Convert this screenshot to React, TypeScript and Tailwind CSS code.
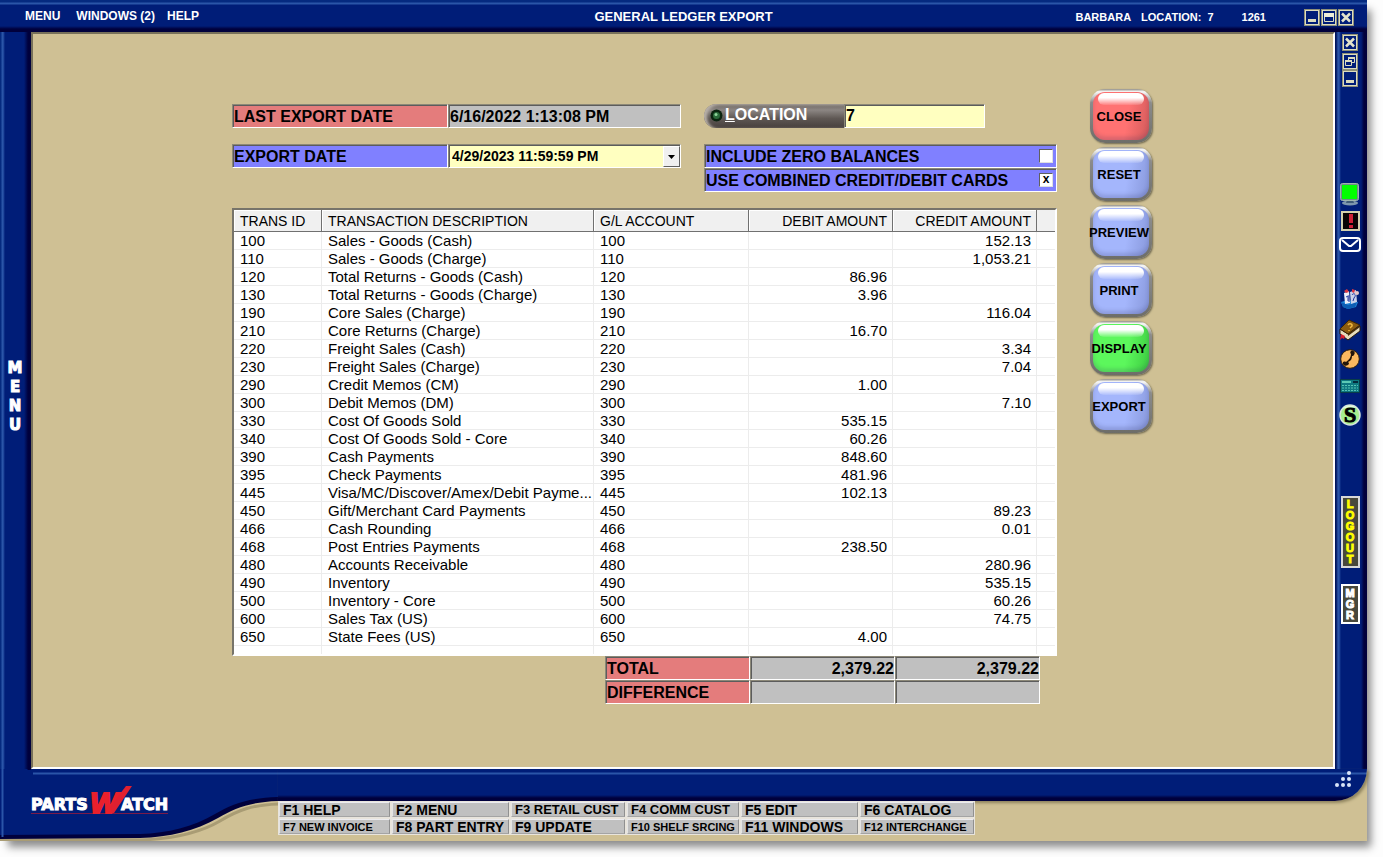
import React from 'react';
import clsx from 'clsx';

const rows = [
  ['100', 'Sales - Goods (Cash)', '', '152.13'],
  ['110', 'Sales - Goods (Charge)', '', '1,053.21'],
  ['120', 'Total Returns - Goods (Cash)', '86.96', ''],
  ['130', 'Total Returns - Goods (Charge)', '3.96', ''],
  ['190', 'Core Sales (Charge)', '', '116.04'],
  ['210', 'Core Returns (Charge)', '16.70', ''],
  ['220', 'Freight Sales (Cash)', '', '3.34'],
  ['230', 'Freight Sales (Charge)', '', '7.04'],
  ['290', 'Credit Memos (CM)', '1.00', ''],
  ['300', 'Debit Memos (DM)', '', '7.10'],
  ['330', 'Cost Of Goods Sold', '535.15', ''],
  ['340', 'Cost Of Goods Sold - Core', '60.26', ''],
  ['390', 'Cash Payments', '848.60', ''],
  ['395', 'Check Payments', '481.96', ''],
  ['445', 'Visa/MC/Discover/Amex/Debit Payme...', '102.13', ''],
  ['450', 'Gift/Merchant Card Payments', '', '89.23'],
  ['466', 'Cash Rounding', '', '0.01'],
  ['468', 'Post Entries Payments', '238.50', ''],
  ['480', 'Accounts Receivable', '', '280.96'],
  ['490', 'Inventory', '', '535.15'],
  ['500', 'Inventory - Core', '', '60.26'],
  ['600', 'Sales Tax (US)', '', '74.75'],
  ['650', 'State Fees (US)', '4.00', ''],
];

const functionKeys = [
  { label: 'F1 HELP', size: 'text-[14px]' },
  { label: 'F2 MENU', size: 'text-[14px]' },
  { label: 'F3 RETAIL CUST', size: 'text-[13px]' },
  { label: 'F4 COMM CUST', size: 'text-[13px]' },
  { label: 'F5 EDIT', size: 'text-[14px]' },
  { label: 'F6 CATALOG', size: 'text-[14px]' },
  { label: 'F7 NEW INVOICE', size: 'text-[11px]' },
  { label: 'F8 PART ENTRY', size: 'text-[14px]' },
  { label: 'F9 UPDATE', size: 'text-[14px]' },
  { label: 'F10 SHELF SRCING', size: 'text-[11px]' },
  { label: 'F11 WINDOWS', size: 'text-[14px]' },
  { label: 'F12 INTERCHANGE', size: 'text-[11px]' },
];

const actions = [
  { label: 'CLOSE', color: 'bg-[linear-gradient(100deg,#ff7272_60%,#d25a5a)]' },
  { label: 'RESET', color: 'bg-[linear-gradient(100deg,#a4b6fc_60%,#8797da)]' },
  { label: 'PREVIEW', color: 'bg-[linear-gradient(100deg,#a4b6fc_60%,#8797da)]' },
  { label: 'PRINT', color: 'bg-[linear-gradient(100deg,#a4b6fc_60%,#8797da)]' },
  { label: 'DISPLAY', color: 'bg-[linear-gradient(100deg,#5cf75c_60%,#3ccb40)]' },
  { label: 'EXPORT', color: 'bg-[linear-gradient(100deg,#a4b6fc_60%,#8797da)]' },
];

const sunken = 'border border-t-[#8c8878] border-l-[#8c8878] border-b-white border-r-white shadow-[inset_1px_1px_0_#5c5c5c]';

const WindowIcon = ({ kind }: { kind: string }) => (
  <svg width="16" height="17" viewBox="0 0 16 17" fill="none" aria-hidden="true">
    <rect x="0.5" y="0.5" width="15" height="16" stroke="#8f9078" />
    <rect x="1.5" y="1.5" width="13" height="14" stroke="#dcdcc0" />
    {kind === 'min' && <path d="M4 10h8v3h-8z" fill="#dcdcc0" />}
    {kind === 'max' && (
      <>
        <path d="M3.5 4.5h9v8h-9z" stroke="#dcdcc0" />
        <path d="M3 4h10v4h-10z" fill="#eeeed8" />
      </>
    )}
    {kind === 'close' && <path d="M4 4.500l8 8M12 4.500l-8 8" stroke="#e4e4cc" strokeWidth="2.500" />}
    {kind === 'restore' && (
      <>
        <path d="M6.5 7V4.5h6v5h-3" stroke="#dcdcc0" />
        <path d="M6 4h7v2h-7z" fill="#dcdcc0" />
        <path d="M3.500 7.500h6v5h-6z" stroke="#dcdcc0" />
        <path d="M3 7h7v2h-7z" fill="#dcdcc0" />
      </>
    )}
  </svg>
);

const WindowButton = ({ kind, label }: { kind: string; label: string }) => (
  <button type="button" aria-label={label} className="block">
    <WindowIcon kind={kind} />
  </button>
);

const TopBar = () => (
  <header className="grid h-8 grid-cols-[1fr_auto_1fr] items-center bg-[linear-gradient(to_bottom,#052a80_0_2px,#2a55a8_3px_4px,#001d78_5px_26px,#00003c_29px)] font-bold text-white">
    <nav className="flex pl-[25px] text-[12px]">
      <a href="#" className="mr-4">MENU</a>
      <a href="#" className="mr-3">WINDOWS (2)</a>
      <a href="#">HELP</a>
    </nav>
    <h1 className="pt-0.5 text-[13px]">GENERAL LEDGER EXPORT</h1>
    <div className="flex items-center justify-end pt-0.5 pr-[13px] text-[11px]">
      <span className="mr-2.5">BARBARA</span>
      <span className="mr-1.5">LOCATION:</span>
      <span className="mr-7">7</span>
      <span className="mr-[38px]">1261</span>
      <div className="flex gap-px">
        <WindowButton kind="min" label="Minimize" />
        <WindowButton kind="max" label="Maximize" />
        <WindowButton kind="close" label="Close" />
      </div>
    </div>
  </header>
);

const MonitorIcon = () => (
  <svg width="20" height="24" viewBox="0 0 20 24" aria-hidden="true">
    <ellipse cx="10" cy="20" rx="8" ry="2.500" fill="#7d96ad" />
    <path d="M7 17h6l1 3h-8z" fill="#3f5b78" />
    <rect x="0.5" y="0.5" width="18" height="17" rx="2" fill="#6f8c8c" stroke="#9eb4ae" />
    <rect x="2" y="2" width="15" height="14" fill="#00ff00" />
  </svg>
);

const AlertIcon = () => (
  <svg width="19" height="20" viewBox="0 0 19 20" aria-hidden="true">
    <rect x="1" y="1" width="17" height="18" fill="#0a0505" stroke="#d4d0ac" strokeWidth="2" />
    <path d="M8 3h4v9h-4zM8 14h4v3h-4z" fill="#cf2036" />
  </svg>
);

const MailIcon = () => (
  <svg width="22" height="16" viewBox="0 0 22 16" fill="none" aria-hidden="true">
    <rect x="1" y="1" width="20" height="13" rx="3" stroke="#fff" strokeWidth="2" />
    <path d="M3 3l7 6h2l7-6" stroke="#fff" strokeWidth="2" />
  </svg>
);

const CardsIcon = () => (
  <svg width="20" height="20" viewBox="0 0 20 20" aria-hidden="true">
    <path d="M1 13l7-2 10 2-2 5-8 2-5-2z" fill="#1c84d8" />
    <path d="M1 13l7 3 9-3-2 5-7 2-5-2z" fill="#0d5db4" />
    <path d="M4 4l5-2 1 12-5 1z" fill="#eef0fa" />
    <path d="M10 3l6-2 1 12-6 2z" fill="#c9d1ea" />
    <path d="M4 2l3-2 2 3-3 1zM12 0l3 1-1 3-2-1z" fill="#d93844" />
    <path d="M6 8l2-1v5M12 6c2-3 5 0 2 3l-1 3M9 6v7" stroke="#2538a0" fill="none" />
    <circle cx="17" cy="4" r="2" fill="#e8c8c8" />
  </svg>
);

const BookIcon = () => (
  <svg width="22" height="22" viewBox="0 0 22 22" aria-hidden="true">
    <path d="M1 10l8 5 12-8v5l-12 9-8-6z" fill="#e6ddbd" stroke="#2c1b08" />
    <path d="M10 1l11 5-12 9-8-5z" fill="#8a5c10" stroke="#3b2405" />
    <path d="M9 15l12-8v1l-12 9z" fill="#4b3006" />
    <path d="M9 6c2-3 6 0 3 2l-1 1M10 11v1" stroke="#f1ba40" strokeWidth="1.500" fill="none" />
    <path d="M2 15l4 2-1 3-2-1-2 2z" fill="#d81f2a" />
  </svg>
);

const PhoneIcon = () => (
  <svg width="20" height="20" viewBox="0 0 20 20" aria-hidden="true">
    <circle cx="10" cy="10" r="9.300" fill="#fbb860" stroke="#2c1c08" />
    <path d="M11 2c4-1 5 3 2 5h-1c0 3-1 5-4 6l1 1c0 3-5 4-6 1-1-2 1-3 3-2 3-2 5-5 5-8-1-1-1-2 0-3z" fill="#23150a" />
  </svg>
);

const CalculatorIcon = () => (
  <svg width="20" height="14" viewBox="0 0 20 14" aria-hidden="true">
    <rect width="20" height="14" fill="#083c48" />
    <rect x="1" y="1" width="18" height="12" fill="#0f7880" />
    <path d="M2 3h9" stroke="#5cc9b4" strokeWidth="2" />
    <path d="M2 6.500h16M2 9h16M2 11.500h16" stroke="#58c4b4" strokeDasharray="2 1" />
    <path d="M13 3h5" stroke="#052a3c" strokeWidth="2" />
  </svg>
);

const DollarIcon = () => (
  <svg width="22" height="24" viewBox="0 0 22 24" aria-hidden="true">
    <circle cx="11" cy="12" r="10" fill="#a5ee8e" stroke="#d6e6dc" strokeWidth="1.500" />
    <path d="M4 6c2-4 10-5 13-1-4-1-9-1-13 1z" fill="#e7fbe0" />
    <text x="11" y="19" textAnchor="middle" fontFamily="Liberation Serif, serif" fontWeight="700" fontSize="22" stroke="#000" strokeWidth="1">S</text>
  </svg>
);

const IconButton = ({ label, className, children }: { label: string; className?: string; children: React.ReactNode }) => (
  <button type="button" aria-label={label} className={clsx('block', className)}>
    {children}
  </button>
);

const StackedLetters = ({ word, className }: { word: string; className: string }) => (
  <>
    {word.split('').map((letter, i) => (
      <span key={i} className={clsx('block text-center', className)}>{letter}</span>
    ))}
  </>
);

const RightBar = () => (
  <aside className="flex w-8 flex-col items-center bg-[linear-gradient(to_right,#00145c_0_1px,#2a55a8_3px_4px,#001d78_6px_26px,#00003c_29px)] pt-0.5 pr-0.5">
    <WindowButton kind="close" label="Close form" />
    <div className="mt-0.5"><WindowButton kind="restore" label="Restore form" /></div>
    <WindowButton kind="min" label="Minimize form" />
    <IconButton label="Workstation" className="mt-24"><MonitorIcon /></IconButton>
    <IconButton label="Alerts" className="mt-1"><AlertIcon /></IconButton>
    <IconButton label="Mail" className="mt-1.5"><MailIcon /></IconButton>
    <IconButton label="Cards" className="mt-9"><CardsIcon /></IconButton>
    <IconButton label="Help book" className="mt-2.5"><BookIcon /></IconButton>
    <IconButton label="Phone" className="mt-2"><PhoneIcon /></IconButton>
    <IconButton label="Calculator" className="mt-2.5"><CalculatorIcon /></IconButton>
    <IconButton label="Sales" className="mt-2.5"><DollarIcon /></IconButton>
    <button type="button" aria-label="Logout" className="mt-[69px] h-[72px] w-[19px] border-2 border-[#d8d8d8] bg-[#48483c] font-bold text-[#ffff00]">
      <StackedLetters word="LOGOUT" className="text-[11px] leading-[11px] [-webkit-text-stroke:1px_#ffff00]" />
    </button>
    <button type="button" aria-label="Manager" className="mt-4 h-10 w-[19px] border-2 border-white bg-[#48483c] font-bold text-white">
      <StackedLetters word="MGR" className="text-[11px] leading-[11px] [-webkit-text-stroke:1px_#ffffff]" />
    </button>
  </aside>
);

const ExportForm = () => (
  <form className="grid grid-cols-[449px_353px] justify-between text-[16px] leading-5 font-bold text-black">
    <div className="flex flex-col gap-4">
      <div className="flex h-6">
        <label htmlFor="last-export" className={clsx('w-[216px] bg-[#e47c7c] px-px pt-0.5', sunken)}>LAST EXPORT DATE</label>
        <input id="last-export" readOnly defaultValue="6/16/2022 1:13:08 PM" className={clsx('w-[233px] bg-[#c0c0c0] px-px pt-0.5 outline-none', sunken)} />
      </div>
      <div className="flex h-6">
        <label htmlFor="export-date" className={clsx('w-[216px] bg-[#8080ff] px-px pt-0.5', sunken)}>EXPORT DATE</label>
        <div className={clsx('flex w-[233px] bg-[#ffffc0] pt-px pl-px', sunken)}>
          <select id="export-date" className="flex-1 appearance-none bg-transparent px-0.5 pb-0.5 text-[14px] outline-none">
            <option>4/29/2023 11:59:59 PM</option>
          </select>
          <span className="pointer-events-none flex w-[17px] items-center justify-center border border-t-white border-r-[#606060] border-b-[#606060] border-l-white bg-[#f0f0f0]">
            <svg width="7" height="4" viewBox="0 0 7 4" aria-hidden="true"><path d="M0 0h7L3.500 4z" /></svg>
          </span>
        </div>
      </div>
    </div>
    <div>
      <div className="mb-4 flex h-6">
        <button type="button" className="flex w-[140px] items-center gap-0.5 rounded-l-full bg-[linear-gradient(to_bottom,#6a6460,#8c8683_25%,#5f5854_60%,#47403d)] pb-0.5 pl-1.5 text-white shadow-[inset_3px_1px_3px_#b8b0a8]">
          <svg width="13" height="13" viewBox="0 0 13 13" aria-hidden="true" className="mt-px">
            <circle cx="6.500" cy="6.500" r="6" fill="#0b2410" />
            <circle cx="6.500" cy="6.500" r="3.500" fill="#2a6b3a" />
            <circle cx="6" cy="5.500" r="1.500" fill="#8fd49b" />
          </svg>
          <span><u>L</u>OCATION</span>
        </button>
        <input aria-label="Location" defaultValue="7" className={clsx('w-[141px] bg-[#ffffc0] px-px outline-none', sunken)} />
      </div>
      <Check id="zero" label="INCLUDE ZERO BALANCES" />
      <Check id="combined" label="USE COMBINED CREDIT/DEBIT CARDS" checked />
    </div>
  </form>
);

const Check = ({ id, label, checked = false }: { id: string; label: string; checked?: boolean }) => (
  <div className={clsx('flex h-6 items-center justify-between bg-[#8080ff] pr-[3px] pl-px', sunken)}>
    <label htmlFor={id} className="pt-px">{label}</label>
    <div className="grid h-3.5 w-3.5">
      <input id={id} type="checkbox" defaultChecked={checked} className="peer col-start-1 row-start-1 h-3.5 w-3.5 appearance-none border border-t-[#606060] border-r-[#e0e0e0] border-b-[#e0e0e0] border-l-[#606060] bg-white" />
      <span className="pointer-events-none invisible col-start-1 row-start-1 text-center text-[12px] leading-3 peer-checked:visible">x</span>
    </div>
  </div>
);

const headCell = 'h-[22px] border-r border-b border-[#707070] bg-[#f0f0f0] pr-[5px] pl-1.5 text-[14px] leading-5 font-normal shadow-[inset_1px_1px_0_#fff]';
const cell = 'h-[18px] overflow-hidden border-r border-b border-[#ececec] pr-[5px] pl-1.5 leading-[17px] whitespace-nowrap';

const LedgerTable = () => (
  <div className="mt-4 border-2 border-t-[#77746a] border-r-white border-b-white border-l-[#77746a] bg-white">
    <table className="w-full table-fixed border-separate border-spacing-0 text-[15px] text-black">
      <colgroup>
        <col className="w-[88px]" />
        <col className="w-[272px]" />
        <col className="w-[155px]" />
        <col className="w-36" />
        <col className="w-36" />
        <col />
      </colgroup>
      <thead>
        <tr>
          <th className={clsx(headCell, 'text-left')}>TRANS ID</th>
          <th className={clsx(headCell, 'text-left')}>TRANSACTION DESCRIPTION</th>
          <th className={clsx(headCell, 'text-left')}>G/L ACCOUNT</th>
          <th className={clsx(headCell, 'text-right')}>DEBIT AMOUNT</th>
          <th className={clsx(headCell, 'text-right')}>CREDIT AMOUNT</th>
          <td className="border-b border-[#707070] bg-[#f0f0f0]" />
        </tr>
      </thead>
      <tbody>
        {rows.map(([id, description, debit, credit]) => (
          <tr key={id}>
            <td className={cell}>{id}</td>
            <td className={cell}>{description}</td>
            <td className={cell}>{id}</td>
            <td className={clsx(cell, 'text-right')}>{debit}</td>
            <td className={clsx(cell, 'text-right')}>{credit}</td>
            <td className="border-b border-[#ececec]" />
          </tr>
        ))}
        <tr className="h-2">
          <td className="border-r border-[#ececec]" />
          <td className="border-r border-[#ececec]" />
          <td className="border-r border-[#ececec]" />
          <td className="border-r border-[#ececec]" />
          <td className="border-r border-[#ececec]" />
          <td />
        </tr>
      </tbody>
    </table>
  </div>
);

const Totals = () => (
  <table className="mr-[17px] ml-auto w-[435px] table-fixed border-separate border-spacing-0 text-[16px] leading-5 font-bold text-black">
    <tbody>
      <tr>
        <th scope="row" className={clsx('h-6 bg-[#e47c7c] px-px pt-0.5 text-left', sunken)}>TOTAL</th>
        <td className={clsx('bg-[#c0c0c0] pt-0.5 text-right', sunken)}>2,379.22</td>
        <td className={clsx('bg-[#c0c0c0] pt-0.5 text-right', sunken)}>2,379.22</td>
      </tr>
      <tr>
        <th scope="row" className={clsx('h-6 bg-[#e47c7c] px-px pt-0.5 text-left', sunken)}>DIFFERENCE</th>
        <td className={clsx('bg-[#c0c0c0]', sunken)} />
        <td className={clsx('bg-[#c0c0c0]', sunken)} />
      </tr>
    </tbody>
  </table>
);

const ActionButton = ({ label, color }: { label: string; color: string }) => (
  <button
    type="button"
    className="relative h-[54px] w-[62px] rounded-[15px] bg-[linear-gradient(to_bottom,#8f8c84,#fafafa_5%,#8c8c8c_25%,#6d6d68)] p-[3px] text-[13px] font-bold text-black shadow-[1px_1px_2px_#6f6850]"
  >
    <span className={clsx('flex h-full w-full items-center justify-center rounded-[12px] shadow-[inset_0_-3px_4px_rgba(40,40,90,0.2)]', color)}>
      <span className="absolute top-1 right-2 left-2 h-3 rounded-[6px] bg-linear-to-b from-white from-40% to-white/10" />
      <span className="relative mt-0.5 mr-1">{label}</span>
    </span>
  </button>
);

const Logo = () => (
  <>
    <path d="M31 44.500h137" stroke="#7a1a48" />
    <text x="31" y="41" fontFamily="DejaVu Sans, sans-serif" fontWeight="700" fontSize="16" fill="#fff" stroke="#fff" strokeWidth="1">PARTS</text>
    <text x="90" y="44" fontFamily="Liberation Sans, sans-serif" fontWeight="700" fontStyle="italic" fontSize="30" fill="#e8202c" stroke="#e8202c" strokeWidth="2">W</text>
    <path d="M112 44l-2-6 16-21h6l-18 27z" fill="#e02030" />
    <text x="121" y="41" fontFamily="DejaVu Sans, sans-serif" fontWeight="700" fontSize="16" fill="#fff" stroke="#fff" strokeWidth="1">ATCH</text>
  </>
);

const Footer = () => (
  <footer className="flex h-[72px]">
    <svg width="278" height="72" viewBox="0 0 278 72" className="shrink-0" role="img" aria-label="PartsWatch">
      <path d="M0 72V71L140 71C172 70 198 65 220 52C238 41 252 36 278 35" fill="none" stroke="#8f845f" strokeWidth="3" opacity="0.6" />
      <path d="M0 0H278V32C250 33 235 39 218 49C195 62 170 68 140 69L0 70Z" fill="#00003c" />
      <path d="M0 0H278V28C248 29 232 35 215 45C193 58 168 64 140 65L0 66Z" fill="#001d78" />
      <path d="M2.500 0V68" stroke="#2a55a8" strokeWidth="2" />
      <path d="M27 0h4v1h-3z" fill="#00003c" />
      <path d="M33 4.500H278" stroke="#2a55a8" strokeWidth="2" />
      <Logo />
    </svg>
    <div className="flex flex-1 flex-col">
      <div className="flex h-8 items-start justify-end rounded-br-[32px] bg-[linear-gradient(to_bottom,#001d78_0_3px,#2a55a8_4px_5px,#001d78_6px_26px,#00003c_29px)] pr-[15px] shadow-[2px_2px_3px_#8f845f]">
        <svg width="17" height="17" viewBox="0 0 17 17" fill="#d8e4f8" aria-hidden="true" className="mt-0.5">
          <circle cx="14" cy="2" r="2" />
          <circle cx="8" cy="8" r="2" />
          <circle cx="14" cy="8" r="2" />
          <circle cx="2" cy="14" r="2" />
          <circle cx="8" cy="14" r="2" />
          <circle cx="14" cy="14" r="2" />
        </svg>
      </div>
      <div className="z-10 grid grid-cols-[113px_119px_116px_114px_119px_116px]">
        {functionKeys.map(({ label, size }) => (
          <button
            key={label}
            type="button"
            className={clsx('h-[17px] border-2 border-t-[#ececf0] border-r-[#909090] border-b-[#a4a4a4] border-l-[#e4e4e4] bg-[#c0c0c0] pl-[3px] text-left leading-3 font-bold whitespace-nowrap text-black outline outline-[#e8e4dc] -outline-offset-1', size)}
          >
            {label}
          </button>
        ))}
      </div>
    </div>
  </footer>
);

export default function App() {
  return (
    <div className="flex min-h-screen bg-[#fdfdfd] pr-4 pb-4 font-['Liberation_Sans',Arial,sans-serif]">
      <div className="flex flex-1 flex-col bg-[#cfc094] shadow-[6px_8px_8px_-2px_rgba(0,0,0,0.45)]">
        <TopBar />
        <div className="flex flex-1">
          <aside className="flex w-[31px] items-center justify-center bg-[linear-gradient(to_right,#052a80_0_1px,#2a55a8_2px_3px,#001d78_5px_24px,#00003c_28px)]">
            <button type="button" aria-label="Menu" className="mr-px pb-2 font-['DejaVu_Sans',sans-serif] font-bold text-white">
              <StackedLetters word="MENU" className="text-[15px] leading-[19px] [-webkit-text-stroke:1px_#ffffff]" />
            </button>
          </aside>
          <main className="flex flex-1 justify-center border-2 border-t-[#77705a] border-r-white border-b-white border-l-[#77705a] pt-[55px] pl-[18px]">
            <div className="flex items-start gap-[33px]">
              <div className="w-[825px] pt-[15px]">
                <ExportForm />
                <LedgerTable />
                <Totals />
              </div>
              <div className="flex flex-col gap-1">
                {actions.map((action) => (
                  <ActionButton key={action.label} {...action} />
                ))}
              </div>
            </div>
          </main>
          <RightBar />
        </div>
        <Footer />
      </div>
    </div>
  );
}
